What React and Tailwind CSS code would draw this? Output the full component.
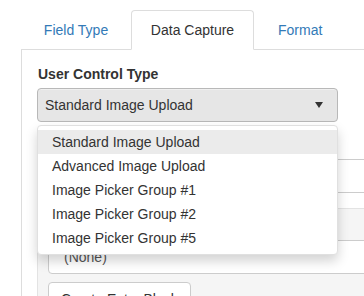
import React from "react";

export default function App() {
  const items = [
    "Standard Image Upload",
    "Advanced Image Upload",
    "Image Picker Group #1",
    "Image Picker Group #2",
    "Image Picker Group #5",
  ];
  return (
    <div className="relative w-[364px] h-[296px] overflow-hidden bg-white font-['Liberation_Sans',Arial,sans-serif] text-[14px] leading-[20px] text-[#333]">
      {/* Tabs */}
      <div className="ml-[21px] mt-[10px] flex border-b border-[#ddd] pl-[2px] whitespace-nowrap">
        <div className="py-[9px] text-[#337ab7] mr-[2px] w-[106px] text-center border border-transparent -mb-px">Field Type</div>
        <div className="py-[9px] border border-[#ddd] border-b-white rounded-t-[4px] bg-white -mb-px w-[123px] text-center">Data Capture</div>
        <div className="pl-[23px] py-[9px] text-[#337ab7] border border-transparent -mb-px">Format</div>
      </div>

      {/* Panel */}
      <div className="ml-[21px] border-l border-[#ddd] h-[260px] pl-[15px] pr-[26px] pt-[14px]">
        <div className="font-bold mb-[4px] pl-[1px]">User Control Type</div>
        <div className="h-[34px] flex items-center justify-between border border-[#b8b8b8] bg-[#e6e6e6] rounded-[4px] pl-[7px] pr-[14px] shadow-[inset_0_1px_0_rgba(255,255,255,0.4)]">
          <span>Standard Image Upload</span>
          <svg width="8" height="6" viewBox="0 0 8 6"><path d="M0 0 L8 0 L4 6 Z" fill="#333" /></svg>
        </div>
        <div className="mt-[37px] h-[34px] border border-[#ccc] rounded-[4px] -mr-[40px]"></div>
        <div className="mt-[15px] bg-[#f5f5f5] border border-[#e3e3e3] rounded-[4px] -mr-[40px] pl-[10px] pt-[31px] h-[120px]">
          <div className="h-[34px] border border-[#ccc] rounded-[4px] bg-white px-[15px] py-[6px] text-[#555]">(None)</div>
          <div className="mt-[8px] inline-block h-[34px] border border-[#ccc] rounded-[4px] bg-white px-[12px] py-[6px] whitespace-nowrap">Create Entry Block</div>
        </div>
      </div>

      {/* Dropdown menu */}
      <div className="absolute left-[37px] top-[125px] w-[301px] bg-white border border-[#e0e0e0] rounded-[4px] py-[4px] shadow-[0_6px_12px_rgba(0,0,0,0.175)]">
        {items.map((t, i) => (
          <div key={t} className={`h-[24px] leading-[24px] px-[14px] ${i === 0 ? "bg-[#ebebeb]" : ""}`}>{t}</div>
        ))}
      </div>
    </div>
  );
}
